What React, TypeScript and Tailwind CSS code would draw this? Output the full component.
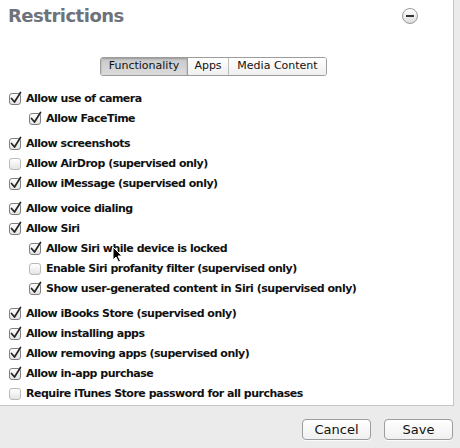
import React from 'react'

type Item = { label: string; checked: boolean; indent?: boolean }

const groups: Item[][] = [
  [
    { label: 'Allow use of camera', checked: true },
    { label: 'Allow FaceTime', checked: true, indent: true },
  ],
  [
    { label: 'Allow screenshots', checked: true },
    { label: 'Allow AirDrop (supervised only)', checked: false },
    { label: 'Allow iMessage (supervised only)', checked: true },
  ],
  [
    { label: 'Allow voice dialing', checked: true },
    { label: 'Allow Siri', checked: true },
    { label: 'Allow Siri while device is locked', checked: true, indent: true },
    { label: 'Enable Siri profanity filter (supervised only)', checked: false, indent: true },
    { label: 'Show user-generated content in Siri (supervised only)', checked: true, indent: true },
  ],
  [
    { label: 'Allow iBooks Store (supervised only)', checked: true },
    { label: 'Allow installing apps', checked: true },
    { label: 'Allow removing apps (supervised only)', checked: true },
    { label: 'Allow in-app purchase', checked: true },
    { label: 'Require iTunes Store password for all purchases', checked: false },
  ],
]

function Checkbox({ checked }: { checked: boolean }) {
  return (
    <span
      className={`relative w-3 h-3 shrink-0 rounded-[3px] border bg-gradient-to-b from-white to-[#e4e4e4] ${
        checked ? 'border-[#7f7f7f]' : 'border-[#b9b9b9]'
      }`}
    >
      {checked && (
        <svg className="absolute -top-[3px] -left-[1px] overflow-visible" width="14" height="14" viewBox="0 0 14 14">
          <path d="M2.5 7.5 L5.5 11 L11.5 1.5" fill="none" stroke="#262626" strokeWidth="1.7" strokeLinecap="round" strokeLinejoin="round" />
        </svg>
      )}
    </span>
  )
}

function Row({ item }: { item: Item }) {
  return (
    <div className={`h-5 flex items-center gap-[5px] ${item.indent ? 'pl-[29px]' : 'pl-[9px]'}`}>
      <Checkbox checked={item.checked} />
      <span className="text-[11px] font-bold text-[#111] whitespace-nowrap tracking-[-0.5px]">{item.label}</span>
    </div>
  )
}

export default function App() {
  return (
    <div
      className="w-[460px] h-[448px] bg-[#ebebeb] relative overflow-hidden"
      style={{ fontFamily: '"DejaVu Sans", "Liberation Sans", sans-serif' }}
    >
      <div className="w-[454px] h-[406px] bg-white border-r border-b border-[#c6c6c6]">
        {/* Header */}
        <div className="flex items-center justify-between pl-2 pr-[35px] pt-[2px]">
          <h1 className="text-[18px] font-bold text-[#6e727a] tracking-[-0.5px]">Restrictions</h1>
          <span className="w-[16px] h-[16px] rounded-full border border-[#9a9a9a] bg-gradient-to-b from-white to-[#dcdcdc] flex items-center justify-center">
            <span className="w-[8px] h-[2px] bg-[#333]" />
          </span>
        </div>

        {/* Segmented control */}
        <div className="mt-[28px] ml-[100px] flex w-[227px] h-[19px] border border-[#9c9c9c] rounded-[3px] overflow-hidden text-[11px] text-[#111]">
          <div className="w-[87px] flex items-center justify-center bg-gradient-to-b from-[#c9c9c9] to-[#dcdcdc] border-r border-[#9c9c9c] shadow-[inset_0_1px_2px_rgba(0,0,0,0.25)]">
            Functionality
          </div>
          <div className="w-[41px] flex items-center justify-center bg-gradient-to-b from-white to-[#efefef] border-r border-[#bdbdbd]">
            Apps
          </div>
          <div className="flex-1 flex items-center justify-center bg-gradient-to-b from-white to-[#efefef]">
            Media Content
          </div>
        </div>

        {/* Options */}
        <div className="mt-[13px] flex flex-col gap-[5px]">
          {groups.map((g, i) => (
            <div key={i}>
              {g.map((item) => (
                <Row key={item.label} item={item} />
              ))}
            </div>
          ))}
        </div>
      </div>

      {/* Footer */}
      <div className="flex justify-end gap-[13px] pr-[7px] pt-[13px]">
        <button className="w-[69px] h-[21px] rounded-[4px] border border-[#9d9d9d] bg-gradient-to-b from-white to-[#f0f0f0] text-[13px] text-[#111] shadow-[0_1px_0_rgba(255,255,255,0.8)]">
          Cancel
        </button>
        <button className="w-[69px] h-[21px] rounded-[4px] border border-[#9d9d9d] bg-gradient-to-b from-white to-[#f0f0f0] text-[13px] text-[#111] shadow-[0_1px_0_rgba(255,255,255,0.8)]">
          Save
        </button>
      </div>

      {/* Mouse cursor */}
      <svg className="absolute left-[112px] top-[246px]" width="11" height="17" viewBox="0 0 11 17">
        <path d="M1 1 L1 14 L4 11 L6.5 16 L8.5 15 L6 10 L10 10 Z" fill="#000" stroke="#fff" strokeWidth="1" strokeLinejoin="round" />
      </svg>
    </div>
  )
}
